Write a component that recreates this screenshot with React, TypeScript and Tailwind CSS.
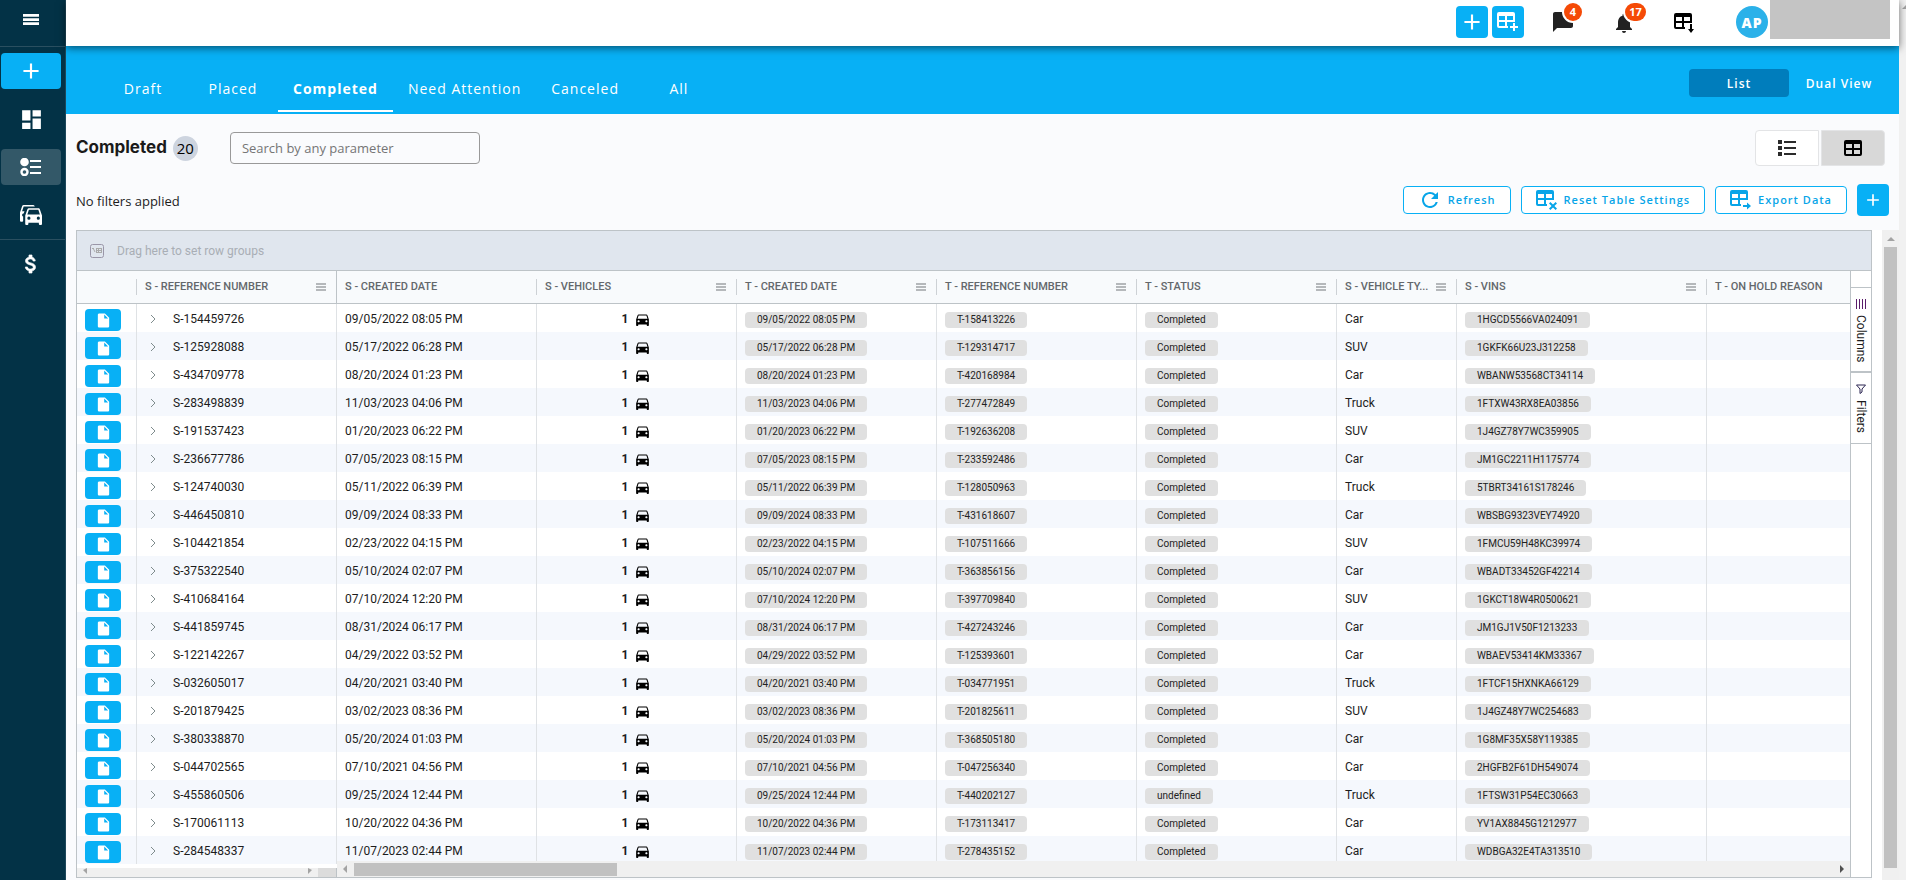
import { useState } from 'react';
import type { ReactNode } from 'react';
import {
  MdAdd,
  MdChatBubble,
  MdDashboard,
  MdDirectionsCar,
  MdInsertDriveFile,
  MdNotifications,
  MdRefresh,
} from 'react-icons/md';

type Order = {
  ref: string;
  created: string;
  tRef: string;
  status: string;
  type: string;
  vin: string;
};

const orders: Order[] = [
  { ref: 'S-154459726', created: '09/05/2022 08:05 PM', tRef: 'T-158413226', status: 'Completed', type: 'Car', vin: '1HGCD5566VA024091' },
  { ref: 'S-125928088', created: '05/17/2022 06:28 PM', tRef: 'T-129314717', status: 'Completed', type: 'SUV', vin: '1GKFK66U23J312258' },
  { ref: 'S-434709778', created: '08/20/2024 01:23 PM', tRef: 'T-420168984', status: 'Completed', type: 'Car', vin: 'WBANW53568CT34114' },
  { ref: 'S-283498839', created: '11/03/2023 04:06 PM', tRef: 'T-277472849', status: 'Completed', type: 'Truck', vin: '1FTXW43RX8EA03856' },
  { ref: 'S-191537423', created: '01/20/2023 06:22 PM', tRef: 'T-192636208', status: 'Completed', type: 'SUV', vin: '1J4GZ78Y7WC359905' },
  { ref: 'S-236677786', created: '07/05/2023 08:15 PM', tRef: 'T-233592486', status: 'Completed', type: 'Car', vin: 'JM1GC2211H1175774' },
  { ref: 'S-124740030', created: '05/11/2022 06:39 PM', tRef: 'T-128050963', status: 'Completed', type: 'Truck', vin: '5TBRT34161S178246' },
  { ref: 'S-446450810', created: '09/09/2024 08:33 PM', tRef: 'T-431618607', status: 'Completed', type: 'Car', vin: 'WBSBG9323VEY74920' },
  { ref: 'S-104421854', created: '02/23/2022 04:15 PM', tRef: 'T-107511666', status: 'Completed', type: 'SUV', vin: '1FMCU59H48KC39974' },
  { ref: 'S-375322540', created: '05/10/2024 02:07 PM', tRef: 'T-363856156', status: 'Completed', type: 'Car', vin: 'WBADT33452GF42214' },
  { ref: 'S-410684164', created: '07/10/2024 12:20 PM', tRef: 'T-397709840', status: 'Completed', type: 'SUV', vin: '1GKCT18W4R0500621' },
  { ref: 'S-441859745', created: '08/31/2024 06:17 PM', tRef: 'T-427243246', status: 'Completed', type: 'Car', vin: 'JM1GJ1V50F1213233' },
  { ref: 'S-122142267', created: '04/29/2022 03:52 PM', tRef: 'T-125393601', status: 'Completed', type: 'Car', vin: 'WBAEV53414KM33367' },
  { ref: 'S-032605017', created: '04/20/2021 03:40 PM', tRef: 'T-034771951', status: 'Completed', type: 'Truck', vin: '1FTCF15HXNKA66129' },
  { ref: 'S-201879425', created: '03/02/2023 08:36 PM', tRef: 'T-201825611', status: 'Completed', type: 'SUV', vin: '1J4GZ48Y7WC254683' },
  { ref: 'S-380338870', created: '05/20/2024 01:03 PM', tRef: 'T-368505180', status: 'Completed', type: 'Car', vin: '1G8MF35X58Y119385' },
  { ref: 'S-044702565', created: '07/10/2021 04:56 PM', tRef: 'T-047256340', status: 'Completed', type: 'Car', vin: '2HGFB2F61DH549074' },
  { ref: 'S-455860506', created: '09/25/2024 12:44 PM', tRef: 'T-440202127', status: 'undefined', type: 'Truck', vin: '1FTSW31P54EC30663' },
  { ref: 'S-170061113', created: '10/20/2022 04:36 PM', tRef: 'T-173113417', status: 'Completed', type: 'Car', vin: 'YV1AX8845G1212977' },
  { ref: 'S-284548337', created: '11/07/2023 02:44 PM', tRef: 'T-278435152', status: 'Completed', type: 'Car', vin: 'WDBGA32E4TA313510' },
];

const tabs = ['Draft', 'Placed', 'Completed', 'Need Attention', 'Canceled', 'All'];

const markPaths = {
  plus: 'M16 11h2v3h3v2h-3v3h-2v-3h-3v-2h3z',
  down: 'M16 11h2v5h2l-3 4-3-4h2z',
  cross: 'M14.4 12 17 14.6 19.6 12 21 13.4 18.4 16 21 18.6 19.6 20 17 17.4 14.4 20 13 18.6 15.6 16 13 13.4z',
  right: 'M13 15h4v-2.5l4 3.5-4 3.5V17h-4z',
};

// 表格图标，右下角可带操作标记
function TableMark({ mark, className }: { mark: keyof typeof markPaths; className?: string }) {
  return (
    <svg viewBox="0 0 22 20" width="22" height="20" fill="currentColor" className={className}>
      <path fillRule="evenodd" d="M2 0h14a2 2 0 0 1 2 2v8H2v4h9v2H2a2 2 0 0 1-2-2V2a2 2 0 0 1 2-2zM2 4v4h6V4zM10 4v4h6V4z" />
      <path d="M8 9h2v6H8z" />
      <path d={markPaths[mark]} />
    </svg>
  );
}

function TableIcon() {
  return (
    <svg viewBox="0 0 18 16" width="18" height="16" fill="currentColor">
      <path fillRule="evenodd" d="M2 0h14a2 2 0 0 1 2 2v12a2 2 0 0 1-2 2H2a2 2 0 0 1-2-2V2a2 2 0 0 1 2-2zM2 4v4h6V4zM10 4v4h6V4zM2 10v4h6v-4zM10 10v4h6v-4z" />
    </svg>
  );
}

function ListIcon() {
  return (
    <svg viewBox="0 0 18 16" width="18" height="16" fill="currentColor">
      <path d="M0 0h4v4H0zM0 6h4v4H0zM0 12h4v4H0zM6 1h12v2H6zM6 7h12v2H6zM6 13h12v2H6z" />
    </svg>
  );
}

function OrdersIcon() {
  return (
    <svg viewBox="0 0 22 18" width="22" height="18" fill="currentColor">
      <circle cx="4.5" cy="4" r="4.3" />
      <circle cx="4.5" cy="14" r="3" fill="none" stroke="currentColor" strokeWidth="2.4" />
      <path d="M10 2h11v2H10zM10 8h11v2H10zM10 14h11v2H10z" />
    </svg>
  );
}

function FleetIcon() {
  return (
    <svg viewBox="1 2 21 19" width="22" height="20" fill="currentColor">
      <path fillRule="evenodd" d="M8 11 9.5 6.5h9L20 11zM18.5 16a1.5 1.5 0 1 1 0-3 1.5 1.5 0 0 1 0 3zM9.5 16a1.5 1.5 0 1 1 0-3 1.5 1.5 0 0 1 0 3zM19.92 6c-.21-.6-.78-1-1.42-1h-9c-.64 0-1.21.4-1.42 1L6 12v8a1 1 0 0 0 1 1h1a1 1 0 0 0 1-1v-1h10v1a1 1 0 0 0 1 1h1a1 1 0 0 0 1-1v-8z" />
      <path d="M14.92 3c-.21-.6-.78-1-1.42-1h-9c-.64 0-1.21.4-1.42 1L1 9v8a1 1 0 0 0 1 1h1a1 1 0 0 0 1-1v-4.1c-.8-.3-1.2-1.1-.9-1.9.2-.6.8-1 1.4-1L5.27 8H3l1.5-4.5h10.6z" />
    </svg>
  );
}

function DollarIcon() {
  return (
    <svg viewBox="0 0 24 24" width="24" height="24" fill="currentColor" stroke="currentColor" strokeWidth="0.7">
      <path d="M11.8 10.900c-2.270-.59-3-1.200-3-2.150 0-1.090 1.010-1.850 2.700-1.850 1.780 0 2.440.85 2.500 2.100h2.210c-.07-1.720-1.120-3.300-3.210-3.810V3h-3v2.160c-1.940.42-3.500 1.680-3.500 3.610 0 2.310 1.910 3.460 4.700 4.130 2.500.6 3 1.480 3 2.410 0 .69-.49 1.790-2.700 1.790-2.060 0-2.870-.92-2.980-2.100h-2.200c.12 2.190 1.760 3.420 3.680 3.830V21h3v-2.150c1.950-.37 3.500-1.500 3.500-3.550 0-2.840-2.430-3.810-4.700-4.400z" />
    </svg>
  );
}

function Bars({ className }: { className?: string }) {
  return (
    <svg viewBox="0 0 10 8" preserveAspectRatio="none" fill="currentColor" className={className}>
      <path d="M0 0h10v2H0zM0 3h10v2H0zM0 6h10v2H0z" />
    </svg>
  );
}

function Arrow({ d, className }: { d: string; className?: string }) {
  return (
    <svg viewBox="0 0 8 8" width="8" height="8" fill="currentColor" className={className}>
      <path d={d} />
    </svg>
  );
}

function RailButton({ label, children, className = '' }: { label: string; children: ReactNode; className?: string }) {
  return (
    <button aria-label={label} className={`flex h-9 w-[60px] items-center justify-center rounded ${className}`}>
      {children}
    </button>
  );
}

function OutlineButton({ icon, children }: { icon: ReactNode; children: ReactNode }) {
  return (
    <button className="flex h-7 items-center gap-1.5 rounded border border-[#08b0f5] bg-white px-3.5 text-[11px] font-semibold tracking-[1px] text-[#08a5e8]">
      {icon}
      {children}
    </button>
  );
}

function HeadCell({ children, menu = true, last = false, pinned = false }: { children?: ReactNode; menu?: boolean; last?: boolean; pinned?: boolean }) {
  return (
    <th className={`h-[33px] border-b border-[#bdc3c7] bg-[#f8fafc] p-0 text-left text-[11px] font-medium whitespace-nowrap text-[#63676b] ${pinned ? 'border-r' : ''}`}>
      <div className={`flex h-4 items-center justify-between pr-[10px] pl-2 ${last || pinned ? '' : 'border-r border-[#cdd1d5]'}`}>
        <span>{children}</span>
        {menu && <Bars className="h-2 w-[10px] shrink-0 text-[#b5b8bb]" />}
      </div>
    </th>
  );
}

function Cell({ children, last = false }: { children?: ReactNode; last?: boolean }) {
  return <td className={`h-7 overflow-hidden px-2 pt-[2px] pb-0 whitespace-nowrap ${last ? '' : 'border-r border-[#dfe2e5]'}`}>{children}</td>;
}

function Pill({ children }: { children: ReactNode }) {
  return (
    <span className="mt-[2px] flex w-fit rounded bg-[#e0e0e0] px-3 text-[10px] leading-4 text-[#222]">{children}</span>
  );
}

export default function App() {
  const [activeTab, setActiveTab] = useState('Completed');

  return (
    <div className="flex h-screen overflow-hidden bg-[#fafbfd] font-['Open_Sans',sans-serif] text-[#1c1c1c]">
      {/* 侧边导航 */}
      <nav className="flex w-[66px] shrink-0 flex-col border-r border-[#1d475a] bg-[#033246]">
        <div className="flex h-[47px] items-center border-b border-[#2a4f60] pb-2 pl-px">
          <RailButton label="Menu"><Bars className="h-[11px] w-4 text-white" /></RailButton>
        </div>
        <div className="flex flex-col gap-3 border-b border-[#2a4f60] py-1.5 pl-px text-white">
          <RailButton label="New order" className="bg-[#08b0f5]"><MdAdd size={26} /></RailButton>
          <RailButton label="Dashboard"><MdDashboard size={25} /></RailButton>
          <RailButton label="Orders" className="bg-[#335868]"><OrdersIcon /></RailButton>
          <RailButton label="Vehicles"><FleetIcon /></RailButton>
        </div>
        <div className="py-1.5 pl-px text-white">
          <RailButton label="Payments"><DollarIcon /></RailButton>
        </div>
      </nav>

      <div className="flex min-w-0 flex-1 flex-col">
        {/* 顶部栏 */}
        <header className="relative z-10 flex h-[46px] shrink-0 items-start justify-end bg-white pr-[9px] shadow-[0_2px_8px_rgba(0,0,0,0.55)]">
          <div className="flex items-center gap-1 pt-1.5 text-white">
            <button aria-label="Add" className="flex h-8 w-8 items-center justify-center rounded bg-[#08b0f5]"><MdAdd size={26} /></button>
            <button aria-label="Add table" className="flex h-8 w-8 items-center justify-center rounded bg-[#08b0f5]"><TableMark mark="plus" /></button>
          </div>
          <button aria-label="Messages" className="relative ml-[27px] pt-[10px] text-[#222]">
            <MdChatBubble size={24} />
            <span className="absolute top-[3px] left-[13px] flex h-[18px] min-w-[18px] items-center justify-center rounded-full bg-[#f54a06] px-1 text-[11px] font-bold text-white ring-2 ring-white">4</span>
          </button>
          <button aria-label="Notifications" className="relative ml-[37px] pt-[11px] text-[#222]">
            <MdNotifications size={24} />
            <span className="absolute top-[3px] left-[13px] flex h-[18px] min-w-[21px] items-center justify-center rounded-full bg-[#f54a06] px-1 text-[11px] font-bold text-white ring-2 ring-white">17</span>
          </button>
          <button aria-label="Downloads" className="ml-[38px] pt-[13px] text-black"><TableMark mark="down" /></button>
          <div className="mt-1.5 ml-10 flex h-8 w-8 items-center justify-center rounded-full bg-[#2bb1e9] text-[14px] font-extrabold tracking-[1px] text-white">AP</div>
          <div className="ml-[2px] h-[39px] w-[120px] bg-[#c4c4c4]" />
        </header>

        {/* 状态标签页 */}
        <div className="flex h-[68px] shrink-0 items-end justify-between bg-[#08b0f5] pr-[10px] pl-8 text-white">
          <div className="flex pb-[2px]">
            {tabs.map((tab) => (
              <button
                key={tab}
                onClick={() => setActiveTab(tab)}
                className={`h-12 min-w-[90px] border-b-2 px-[15px] pt-[2px] text-[14px] tracking-[1px] ${activeTab === tab ? 'border-white font-bold' : 'border-transparent'}`}
              >
                {tab}
              </button>
            ))}
          </div>
          <div className="flex pb-[17px] text-[12px] font-semibold tracking-[1px]">
            <button className="h-7 w-[100px] rounded bg-[#007dbc] pt-px">List</button>
            <button className="h-7 w-[100px] rounded pt-px">Dual View</button>
          </div>
        </div>

        <main className="flex min-h-0 flex-1 flex-col">
          <div className="flex h-[68px] shrink-0 items-center justify-between pr-[14px] pl-[10px]">
            <div className="flex items-center">
              <h1 className="font-['Inter',sans-serif] text-[17px] font-bold text-[#1a1a1a]">Completed</h1>
              <span className="ml-1.5 flex h-[25px] w-[25px] items-center justify-center rounded-full bg-[#cdd4df] text-[15px] text-black">20</span>
              <input
                type="text"
                aria-label="Search"
                placeholder="Search by any parameter"
                className="ml-8 h-8 w-[250px] rounded border border-[#999] bg-[#fafbfd] px-[11px] text-[13px] placeholder:text-[#757575]"
              />
            </div>
            <div className="flex gap-[2px]">
              <button aria-label="List view" className="flex h-9 w-16 items-center justify-center rounded-l border border-[#e3e4e6] bg-white text-[#2b2b2b]"><ListIcon /></button>
              <button aria-label="Table view" className="flex h-9 w-16 items-center justify-center rounded-r border border-[#e3e4e6] bg-[#d8d8d8] text-black"><TableIcon /></button>
            </div>
          </div>

          <div className="flex h-12 shrink-0 items-start justify-between pt-[2px] pr-[10px] pl-[10px]">
            <p className="text-[13px] leading-[34px]">No filters applied</p>
            <div className="flex items-center gap-[10px]">
              <OutlineButton icon={<MdRefresh size={24} />}>Refresh</OutlineButton>
              <OutlineButton icon={<TableMark mark="cross" />}>Reset Table Settings</OutlineButton>
              <OutlineButton icon={<TableMark mark="right" />}>Export Data</OutlineButton>
              <button aria-label="Add view" className="flex h-8 w-8 items-center justify-center rounded bg-[#08b0f5] text-white"><MdAdd size={20} /></button>
            </div>
          </div>

          {/* 数据表格 */}
          <div className="flex min-h-0 flex-1 pl-[10px] font-['Roboto',sans-serif] text-[12px]">
            <section className="mb-[2px] flex min-w-0 flex-1 flex-col border border-[#bdc3c7] bg-white">
              <div className="flex h-10 shrink-0 items-center gap-[13px] border-b border-[#bdc3c7] bg-[#e0e6ee] pl-[13px] text-[#a9aeb5]">
                <svg viewBox="0 0 14 14" width="14" height="14" fill="none" stroke="#9a96a8">
                  <rect x=".5" y=".5" width="13" height="13" rx="2" />
                  <path d="M2 4.500h2M3.500 5l1.500 3M6 4.500h6M6 6.500h6M6 8.500h6M6.500 4v5M8.500 4v5M11.500 4v5" stroke="#aaa" />
                </svg>
                Drag here to set row groups
              </div>

              <div className="flex min-h-0 flex-1">
                {/* 左侧固定列 */}
                <div className="flex w-[260px] shrink-0 flex-col">
                  <div className="min-h-0 flex-1 overflow-hidden">
                    <table className="w-full table-fixed border-separate border-spacing-0">
                      <colgroup>
                        <col className="w-[60px]" />
                        <col />
                      </colgroup>
                      <thead>
                        <tr>
                          <HeadCell menu={false} />
                          <HeadCell pinned>S - REFERENCE NUMBER</HeadCell>
                        </tr>
                      </thead>
                      <tbody>
                        {orders.map((order) => (
                          <tr key={order.ref} className="even:bg-[#f5f8fd]">
                            <Cell>
                              <button aria-label={`Open ${order.ref}`} className="mt-[2px] flex h-[22px] w-9 items-center justify-center rounded bg-[#08b0f5] text-white">
                                <MdInsertDriveFile size={17} />
                              </button>
                            </Cell>
                            <Cell>
                              <div className="flex items-center gap-[17px] pl-[5px]">
                                <svg viewBox="0 0 6 10" width="6" height="10" fill="none" stroke="#7f8c8d">
                                  <path d="m1 1 4 4-4 4" />
                                </svg>
                                {order.ref}
                              </div>
                            </Cell>
                          </tr>
                        ))}
                      </tbody>
                    </table>
                  </div>
                  <div className="flex h-[9px] shrink-0 border-r border-[#bdc3c7] bg-[#f0f0f0] pl-1 text-[#a3a3a3]">
                    <Arrow d="M6 0v6L2 2z" />
                    <Arrow d="M2 0v6l4-4z" className="mr-1 ml-auto" />
                    <div className="w-[18px] bg-[#dcdcdc]" />
                  </div>
                </div>

                <div className="flex min-w-0 flex-1 flex-col">
                  <div className="min-h-0 flex-1 overflow-hidden">
                    <table className="w-full table-fixed border-separate border-spacing-0">
                      <colgroup>
                        <col className="w-[200px]" />
                        <col className="w-[200px]" />
                        <col className="w-[200px]" />
                        <col className="w-[200px]" />
                        <col className="w-[200px]" />
                        <col className="w-[120px]" />
                        <col className="w-[250px]" />
                        <col />
                      </colgroup>
                      <thead>
                        <tr>
                          <HeadCell menu={false}>S - CREATED DATE</HeadCell>
                          <HeadCell>S - VEHICLES</HeadCell>
                          <HeadCell>T - CREATED DATE</HeadCell>
                          <HeadCell>T - REFERENCE NUMBER</HeadCell>
                          <HeadCell>T - STATUS</HeadCell>
                          <HeadCell>S - VEHICLE TY...</HeadCell>
                          <HeadCell>S - VINS</HeadCell>
                          <HeadCell menu={false} last>T - ON HOLD REASON</HeadCell>
                        </tr>
                      </thead>
                      <tbody>
                        {orders.map((order) => (
                          <tr key={order.ref} className="even:bg-[#f5f8fd]">
                            <Cell>{order.created}</Cell>
                            <Cell>
                              <div className="flex items-center justify-center gap-1.5 font-bold">
                                1 <MdDirectionsCar size={17} className="text-black" />
                              </div>
                            </Cell>
                            <Cell><Pill>{order.created}</Pill></Cell>
                            <Cell><Pill>{order.tRef}</Pill></Cell>
                            <Cell><Pill>{order.status}</Pill></Cell>
                            <Cell>{order.type}</Cell>
                            <Cell><Pill>{order.vin}</Pill></Cell>
                            <Cell last />
                          </tr>
                        ))}
                      </tbody>
                    </table>
                  </div>
                  <div className="flex h-4 shrink-0 items-center bg-[#f0f0f0] pr-1 pl-1 text-[#a3a3a3]">
                    <Arrow d="M6 0v8L2 4z" />
                    <div className="ml-[5px] h-[13px] w-[263px] bg-[#c1c1c1]" />
                    <Arrow d="M2 0v8l4-4z" className="ml-auto text-[#505050]" />
                  </div>
                </div>

                {/* 侧边工具面板 */}
                <aside className="flex w-[21px] shrink-0 flex-col border-l border-[#bdc3c7] bg-white pt-4">
                  <button className="flex h-[85px] flex-col items-center gap-1.5 border-y border-[#bdc3c7] pt-[11px]">
                    <svg viewBox="0 0 10 10" width="10" height="10" stroke="#5b1d6b">
                      <path d="M.5 0v10M3.5 0v10M6.5 0v10M9.5 0v10" />
                    </svg>
                    <span className="[writing-mode:vertical-rl]">Columns</span>
                  </button>
                  <button className="flex h-[72px] flex-col items-center gap-1.5 border-y border-[#bdc3c7] pt-[11px]">
                    <svg viewBox="0 0 10 10" width="10" height="10" fill="none" stroke="#2a2450">
                      <path d="M.5 1h9L6 5v3L4 9.5V5z" />
                    </svg>
                    <span className="[writing-mode:vertical-rl]">Filters</span>
                  </button>
                </aside>
              </div>
            </section>

            <div className="w-[10px] shrink-0 bg-white" />
            <div className="flex w-[17px] shrink-0 flex-col items-center bg-[#f0f0f0] pt-[5px] text-[#a3a3a3]">
              <Arrow d="M0 6h8L4 2z" />
              <div className="mt-1 mb-3 w-[13px] flex-1 bg-[#c1c1c1]" />
            </div>
          </div>
        </main>
      </div>

      {/* 页面滚动条 */}
      <div className="flex w-[7px] shrink-0 justify-end overflow-hidden bg-[#f1f1f1] pt-[3px] text-[#a3a3a3]">
        <Arrow d="M4 6h8L8 2z" className="shrink-0" />
      </div>
    </div>
  );
}
